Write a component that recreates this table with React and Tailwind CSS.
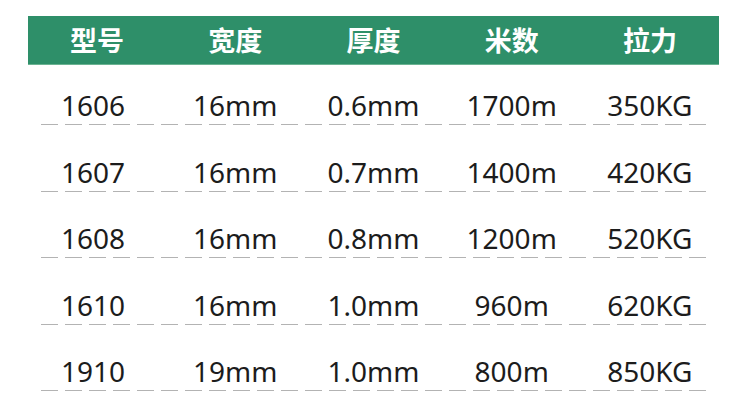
const headers = ["型号", "宽度", "厚度", "米数", "拉力"];

const rows = [
  ["1606", "16mm", "0.6mm", "1700m", "350KG"],
  ["1607", "16mm", "0.7mm", "1400m", "420KG"],
  ["1608", "16mm", "0.8mm", "1200m", "520KG"],
  ["1610", "16mm", "1.0mm", "960m", "620KG"],
  ["1910", "19mm", "1.0mm", "800m", "850KG"],
];

export default function App() {
  return (
    <div className="w-[750px] h-[406px] bg-white overflow-hidden pt-4 px-[28px]">
      <div className="w-[691px]">
        {/* 表头 */}
        <div className="h-[49px] bg-[#2e8f69] border-b border-[#6bb392] grid grid-cols-5 items-center text-white text-[27px] font-bold font-['Noto_Sans_CJK_SC',sans-serif]">
          {headers.map((h) => (
            <div key={h} className="text-center leading-none pb-0.5">
              {h}
            </div>
          ))}
        </div>

        {rows.map((r, i) => (
          <div key={r[0]} className={i === 0 ? "pt-[19px]" : "pt-[25.5px]"}>
            <div className="grid grid-cols-5 h-[40px] items-center text-[28px] text-[#1c1c1c] font-['Noto_Sans',sans-serif]">
              {r.map((c, j) => (
                <div key={j} className={j === 0 ? "text-center pr-2" : "text-center"}>
                  {c}
                </div>
              ))}
            </div>
            <div className="mx-[13px] h-px bg-[repeating-linear-gradient(to_right,#b3b3b3_0_17px,transparent_17px_24px)]" />
          </div>
        ))}
      </div>
    </div>
  );
}
